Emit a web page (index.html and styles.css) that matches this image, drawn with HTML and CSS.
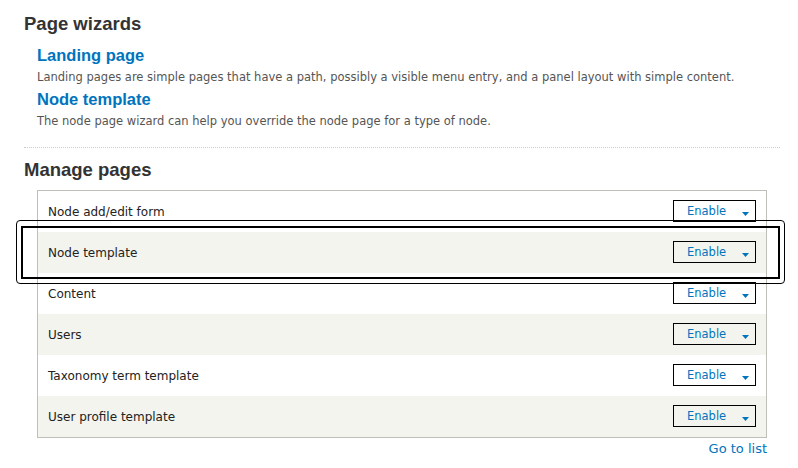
FILE: index.html
```html
<!DOCTYPE html>
<html lang="en">
<head>
  <meta charset="UTF-8">
  <title>Pages</title>
  <link rel="stylesheet" href="styles.css">
</head>
<body>
  <div class="page">
    <section class="wizards">
      <h2>Page wizards</h2>
      <div class="wizard-list">
        <a class="wizard-link" href="#">Landing page</a>
        <p class="wizard-desc">Landing pages are simple pages that have a path, possibly a visible menu entry, and a panel layout with simple content.</p>
        <a class="wizard-link" href="#">Node template</a>
        <p class="wizard-desc">The node page wizard can help you override the node page for a type of node.</p>
      </div>
    </section>

    <section class="manage">
      <h2>Manage pages</h2>
      <div class="page-table">
        <div class="page-row">
          <span class="page-name">Node add/edit form</span>
          <button class="enable-btn"><span>Enable</span><svg class="caret" width="7" height="4" viewBox="0 0 7 4"><path d="M0 0h7L3.5 4z"/></svg></button>
        </div>
        <div class="page-row">
          <span class="page-name">Node template</span>
          <button class="enable-btn"><span>Enable</span><svg class="caret" width="7" height="4" viewBox="0 0 7 4"><path d="M0 0h7L3.5 4z"/></svg></button>
          <div class="highlight"><div class="highlight-inner"></div></div>
        </div>
        <div class="page-row">
          <span class="page-name">Content</span>
          <button class="enable-btn"><span>Enable</span><svg class="caret" width="7" height="4" viewBox="0 0 7 4"><path d="M0 0h7L3.5 4z"/></svg></button>
        </div>
        <div class="page-row">
          <span class="page-name">Users</span>
          <button class="enable-btn"><span>Enable</span><svg class="caret" width="7" height="4" viewBox="0 0 7 4"><path d="M0 0h7L3.5 4z"/></svg></button>
        </div>
        <div class="page-row">
          <span class="page-name">Taxonomy term template</span>
          <button class="enable-btn"><span>Enable</span><svg class="caret" width="7" height="4" viewBox="0 0 7 4"><path d="M0 0h7L3.5 4z"/></svg></button>
        </div>
        <div class="page-row">
          <span class="page-name">User profile template</span>
          <button class="enable-btn"><span>Enable</span><svg class="caret" width="7" height="4" viewBox="0 0 7 4"><path d="M0 0h7L3.5 4z"/></svg></button>
        </div>
      </div>
      <div class="list-link"><a href="#">Go to list</a></div>
    </section>
  </div>
</body>
</html>
```

FILE: styles.css
```css
body {
  margin: 0;
  background: #fff;
  font-family: "DejaVu Sans", Verdana, sans-serif;
  color: #222;
}
a {
  color: #0074bd;
  text-decoration: none;
}
.page {
  padding: 13px 18px 0 24px;
}
h2 {
  margin: 0;
  font-family: "Liberation Sans", Arial, sans-serif;
  font-size: 18.5px;
  line-height: 22px;
  font-weight: bold;
  color: #333;
}
.wizards {
  padding-bottom: 14px;
  border-bottom: 1px dotted #ccc;
}
.wizard-list {
  margin-top: 10px;
  padding-left: 13px;
}
.wizard-link {
  display: block;
  margin-bottom: 4px;
  font-family: "Liberation Sans", Arial, sans-serif;
  font-size: 16.5px;
  line-height: 20px;
  font-weight: bold;
}
.wizard-desc {
  margin: 0 0 4px;
  font-size: 11.5px;
  line-height: 16px;
  color: #555;
}
.manage {
  padding-top: 11px;
}
.page-table {
  margin: 9px 13px 0;
  border: 1px solid #bebfb9;
}
.page-row {
  position: relative;
  display: flex;
  align-items: center;
  justify-content: space-between;
  height: 41px;
  padding: 0 10px;
}
.page-row:nth-child(even) {
  background: #f3f4ee;
}
.page-name {
  font-size: 12px;
  line-height: 16px;
}
.enable-btn {
  display: flex;
  justify-content: space-between;
  box-sizing: border-box;
  width: 83px;
  height: 22px;
  margin-bottom: 2px;
  padding: 0 6px 0 13px;
  border: 1px solid #000;
  border-radius: 0;
  background: transparent;
  font-family: "DejaVu Sans", Verdana, sans-serif;
  font-size: 11.5px;
  line-height: 20px;
  color: #0074bd;
  cursor: pointer;
}
.caret {
  margin-top: 11px;
  fill: #0074bd;
}
.highlight {
  position: absolute;
  left: -22px;
  right: -19px;
  top: -12px;
  bottom: -11px;
  border: 1px solid #000;
  border-radius: 4px;
}
.highlight-inner {
  position: absolute;
  left: 4px;
  right: 4px;
  top: 5px;
  bottom: 4px;
  border: 2px solid #000;
}
.list-link {
  margin: 3px 13px 0;
  text-align: right;
  font-size: 13px;
  line-height: 16px;
}
```
